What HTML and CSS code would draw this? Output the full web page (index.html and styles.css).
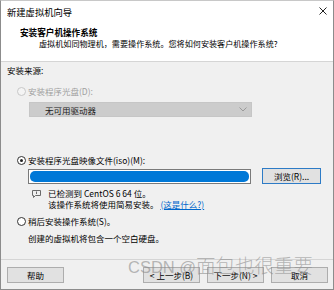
FILE: index.html
```html
<!DOCTYPE html>
<html lang="zh-CN">
<head>
    <meta charset="UTF-8">
    <title>新建虚拟机向导</title>
    <link rel="stylesheet" href="styles.css">
</head>
<body>

<div class="window">
    <div class="titlebar">
        <span class="title">新建虚拟机向导</span>
        <svg class="close" width="8" height="8" viewBox="0 0 8 8">
            <path d="M0.5 0.5 L7.5 7.5 M7.5 0.5 L0.5 7.5" stroke="#222" stroke-width="1"/>
        </svg>
    </div>

    <div class="header">
        <div class="header-title">安装客户机操作系统</div>
        <div class="header-sub">虚拟机如同物理机，需要操作系统。您将如何安装客户机操作系统?</div>
    </div>

    <div class="content">
        <div class="group-label">安装来源:</div>

        <label class="option disabled">
            <span class="radio"></span>
            安装程序光盘(D):
        </label>
        <div class="select">
            <span>无可用驱动器</span>
            <svg class="chevron" width="8" height="5" viewBox="0 0 8 5"><path d="M0.5 0.5 L4 4 L7.5 0.5" fill="none" stroke="#9a9a9a" stroke-width="1"/></svg>
        </div>

        <label class="option iso-option">
            <span class="radio checked"></span>
            安装程序光盘映像文件(iso)(M):
        </label>
        <div class="iso-row">
            <div class="textbox"><div class="selection"></div></div>
            <button class="btn btn-focus">浏览(R)...</button>
        </div>

        <div class="detected">
            <svg class="info-icon" width="9" height="8" viewBox="0 0 9 8">
                <path d="M0.5 0.5 H8.5 V5.5 H3.5 L1.5 7.5 V5.5 H0.5 Z" fill="none" stroke="#6a6a6a" stroke-width="1"/>
                <path d="M4.5 1.5 V4" stroke="#6a6a6a" stroke-width="1"/>
            </svg>
            <div class="detected-text">
                <div>已检测到 CentOS 6 64 位。</div>
                <div>该操作系统将使用简易安装。 <a href="#" class="link">(这是什么?)</a></div>
            </div>
        </div>

        <label class="option later-option">
            <span class="radio"></span>
            稍后安装操作系统(S)。
        </label>
        <div class="later-note">创建的虚拟机将包含一个空白硬盘。</div>
    </div>

    <div class="footer">
        <button class="btn">帮助</button>
        <div class="footer-right">
            <button class="btn">&lt; 上一步(B)</button>
            <button class="btn">下一步(N) &gt;</button>
            <button class="btn">取消</button>
        </div>
    </div>

    <div class="watermark"><span class="wm-latin">CSDN @</span>面包也很重要</div>
</div>

</body>
</html>
```

FILE: styles.css
```css
body {
    margin: 0;
    font-family: 'Noto Sans CJK SC', 'Liberation Sans', sans-serif;
    font-size: 8.5px;
    color: #000;
    background-color: #fff;
}

.window {
    position: relative;
    width: 334px;
    height: 290px;
    box-sizing: border-box;
    border: 1px solid #8c8c8c;
    border-top-color: #c8c8c8;
    display: flex;
    flex-direction: column;
    overflow: hidden;
}

.titlebar {
    height: 21px;
    flex-shrink: 0;
    display: flex;
    align-items: center;
    justify-content: space-between;
    padding: 0 6px 0 6px;
    line-height: 12px;
    font-size: 9.3px;
    background-color: #fff;
}

.close {
    margin-top: -1px;
}

.header {
    flex-shrink: 0;
    background-color: #fff;
    padding: 5px 0 12px 19px;
    line-height: 11px;
    border-bottom: 1px solid #d5d5d5;
}

.header-title {
    font-weight: bold;
    font-size: 8.6px;
}

.header-sub {
    padding-left: 19px;
    font-size: 8.1px;
}

.content {
    flex: 1;
    background-color: #f0f0f0;
    padding: 2px 0 0 6px;
    line-height: 12px;
}

.option {
    display: flex;
    align-items: center;
    gap: 2px;
    margin-left: 10px;
    height: 12px;
}

.option.disabled {
    color: #a0a0a0;
    margin-top: 9px;
}

.radio {
    width: 9px;
    height: 9px;
    border: 1px solid #333;
    border-radius: 50%;
    background-color: #fff;
    box-sizing: border-box;
    position: relative;
}

.option.disabled .radio {
    border-color: #c8c8c8;
    background-color: #f4f4f4;
}

.radio.checked::after {
    content: '';
    position: absolute;
    left: 2px;
    top: 2px;
    width: 3px;
    height: 3px;
    border-radius: 50%;
    background-color: #222;
}

.select {
    margin: 5px 0 0 22px;
    width: 223px;
    height: 15px;
    box-sizing: border-box;
    background-color: #cccccc;
    border: 1px solid #c6c6c6;
    display: flex;
    align-items: center;
    justify-content: space-between;
    padding: 0 4px 0 15px;
    color: #202020;
}

.iso-option {
    margin-top: 37px;
}

.iso-row {
    display: flex;
    align-items: center;
    margin: 2px 0 0 21px;
}

.textbox {
    width: 223px;
    height: 15px;
    box-sizing: border-box;
    background-color: #fff;
    border: 1px solid #7a7a7a;
    padding: 1px;
}

.selection {
    height: 100%;
    background-color: #0078d7;
    border-radius: 5px;
}

.btn {
    font-family: 'Noto Sans CJK SC', 'Liberation Sans', sans-serif;
    font-size: 8.5px;
    line-height: 12px;
    height: 16px;
    width: 57px;
    padding: 0;
    background-color: #e1e1e1;
    border: 1px solid #adadad;
    color: #000;
    white-space: nowrap;
}

.btn-focus {
    margin-left: 11px;
    width: 59px;
    border-color: #2d7bc6;
}

.detected {
    display: flex;
    align-items: flex-start;
    margin: 4px 0 0 25px;
    line-height: 11px;
}

.info-icon {
    margin: 2px 7px 0 0;
}

.link {
    color: #0066cc;
}

.later-option {
    margin-top: 5px;
}

.later-note {
    margin: 5px 0 0 21px;
}

.footer {
    height: 30px;
    flex-shrink: 0;
    box-sizing: border-box;
    background-color: #f0f0f0;
    border-top: 1px solid #d5d5d5;
    display: flex;
    align-items: center;
    justify-content: space-between;
    padding: 0 5px 0 6px;
}

.footer-right {
    display: flex;
    gap: 7px;
}

.watermark {
    position: absolute;
    left: 127px;
    top: 253px;
    font-size: 19.5px;
    line-height: 22px;
    font-weight: 300;
    color: rgba(140, 140, 140, 0.6);
    white-space: nowrap;
}

.wm-latin {
    font-family: 'Liberation Sans', sans-serif;
    font-size: 16.5px;
}
```
